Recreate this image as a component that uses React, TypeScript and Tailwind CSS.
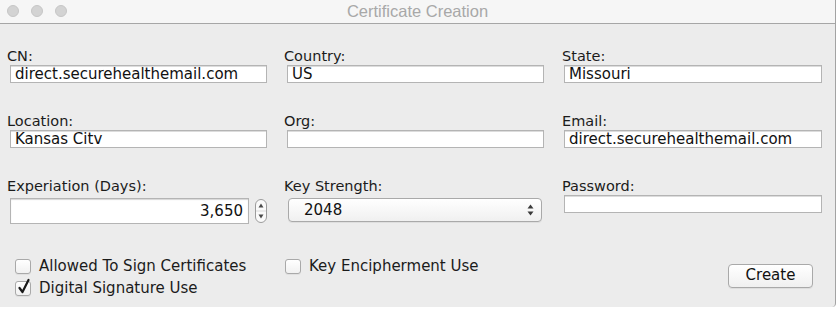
import { useState } from "react"

const labelCls = "h-[17px] leading-[17px] text-[14.5px] text-[#1b1b1b] whitespace-nowrap"
const inputCls =
  "block h-[18px] bg-white border border-[#b4b4b4] shadow-[inset_0_1px_0_#dcdcdc] px-[4px] text-[15px] leading-[16px] text-[#111] outline-none"

function TextField({ label, value, inputClass }: { label: string; value: string; inputClass: string }) {
  return (
    <div className="flex flex-col">
      <div className={labelCls}>{label}</div>
      <input readOnly value={value} className={`${inputCls} ${inputClass}`} />
    </div>
  )
}

function Checkbox({ checked, label }: { checked?: boolean; label: string }) {
  return (
    <div className="flex items-center h-[22px]">
      <div className="relative w-[16px] h-[15px] rounded-[3px] border border-[#a9a9a9] bg-gradient-to-b from-white to-[#f1f1f1] shadow-[0_1px_0_rgba(0,0,0,0.05)]">
        {checked && (
          <svg className="absolute left-[1px] -top-[4px]" width="14" height="17" viewBox="0 0 14 17">
            <path d="M2.5 10 L5.5 14 L11.5 2" fill="none" stroke="#1a1a1a" strokeWidth="2.2" strokeLinecap="round" strokeLinejoin="round" />
          </svg>
        )}
      </div>
      <span className="ml-[8px] text-[15px] leading-[17px] text-[#1b1b1b] whitespace-nowrap">{label}</span>
    </div>
  )
}

function Spinner() {
  return (
    <svg width="12" height="24" viewBox="0 0 12 24" className="ml-[6px] mt-[1px]">
      <rect x="0.5" y="0.5" width="11" height="23" rx="5.5" fill="#fafafa" stroke="#9c9c9c" />
      <path d="M6 4.5 L8.5 8.5 L3.5 8.5 Z" fill="#4a4a4a" />
      <path d="M6 19.5 L8.5 15.5 L3.5 15.5 Z" fill="#4a4a4a" />
      <line x1="1" y1="12" x2="11" y2="12" stroke="#dadada" />
    </svg>
  )
}

export default function App() {
  const [keyStrength] = useState("2048")

  return (
    <div className="w-[838px] h-[310px] bg-white overflow-hidden" style={{ fontFamily: '"DejaVu Sans", sans-serif' }}>
      <div className="w-[836px] h-[307px] bg-[#ececec] border-r border-[#a3a3a3] rounded-br-[4px] flex flex-col">
        {/* Title bar */}
        <div className="relative h-[24px] shrink-0 bg-[#f6f6f6] border-b border-[#a6a6a6] flex items-center justify-center">
          <div className="absolute left-[7px] top-[5px] flex gap-[12px]">
            <div className="w-[12px] h-[12px] rounded-full bg-[#d3d3d3] border border-[#c6c6c6]" />
            <div className="w-[12px] h-[12px] rounded-full bg-[#d3d3d3] border border-[#c6c6c6]" />
            <div className="w-[12px] h-[12px] rounded-full bg-[#d3d3d3] border border-[#c6c6c6]" />
          </div>
          <span className="text-[16.5px] text-[#a8a8a8] leading-none" style={{ fontFamily: '"Liberation Sans", sans-serif' }}>
            Certificate Creation
          </span>
        </div>

        {/* Form */}
        <div className="pl-[7px] pt-[24px] grid grid-cols-[277px_278px_277px] gap-y-[30px]">
          <TextField label="CN:" value="direct.securehealthemail.com" inputClass="ml-[3px] w-[257px]" />
          <TextField label="Country:" value="US" inputClass="ml-[3px] w-[257px]" />
          <TextField label="State:" value="Missouri" inputClass="ml-[2px] w-[258px]" />

          <TextField label="Location:" value="Kansas Citv" inputClass="ml-[3px] w-[257px]" />
          <TextField label="Org:" value="" inputClass="ml-[3px] w-[257px]" />
          <TextField label="Email:" value="direct.securehealthemail.com" inputClass="ml-[2px] w-[258px]" />

          <div className="flex flex-col">
            <div className={labelCls}>Experiation (Days):</div>
            <div className="flex mt-[3px] ml-[3px]">
              <input
                readOnly
                value="3,650"
                className="block w-[239px] h-[26px] bg-white border border-[#b4b4b4] shadow-[inset_0_1px_1px_#d6d6d6] pr-[5px] text-right text-[15px] text-[#111] outline-none"
              />
              <Spinner />
            </div>
          </div>

          <div className="flex flex-col">
            <div className={labelCls}>Key Strength:</div>
            <div className="mt-[3px] ml-[4px] w-[254px] h-[24px] rounded-[4px] border border-[#a9a9a9] bg-gradient-to-b from-white to-[#f0f0f0] shadow-[0_1px_0_rgba(0,0,0,0.06)] flex items-center justify-between pl-[15px] pr-[7px]">
              <span className="text-[15px] text-[#111]">{keyStrength}</span>
              <svg width="7" height="12" viewBox="0 0 7 12">
                <path d="M3.5 0.5 L6.5 4.5 L0.5 4.5 Z" fill="#3a3a3a" />
                <path d="M3.5 11.5 L6.5 7.5 L0.5 7.5 Z" fill="#3a3a3a" />
              </svg>
            </div>
          </div>

          <TextField label="Password:" value="" inputClass="ml-[2px] w-[258px]" />
        </div>

        {/* Options */}
        <div className="pl-[15px] mt-[31px] grid grid-cols-[270px_440px_auto]">
          <div className="flex flex-col">
            <Checkbox label="Allowed To Sign Certificates" />
            <Checkbox checked label="Digital Signature Use" />
          </div>
          <div className="flex flex-col">
            <Checkbox label="Key Encipherment Use" />
          </div>
          <div className="pt-[8px] pl-[3px]">
            <button className="w-[85px] h-[24px] rounded-[4px] border border-[#a9a9a9] bg-gradient-to-b from-white to-[#f0f0f0] shadow-[0_1px_0_rgba(0,0,0,0.06)] text-[15px] text-[#111] leading-none">
              Create
            </button>
          </div>
        </div>
      </div>
    </div>
  )
}
